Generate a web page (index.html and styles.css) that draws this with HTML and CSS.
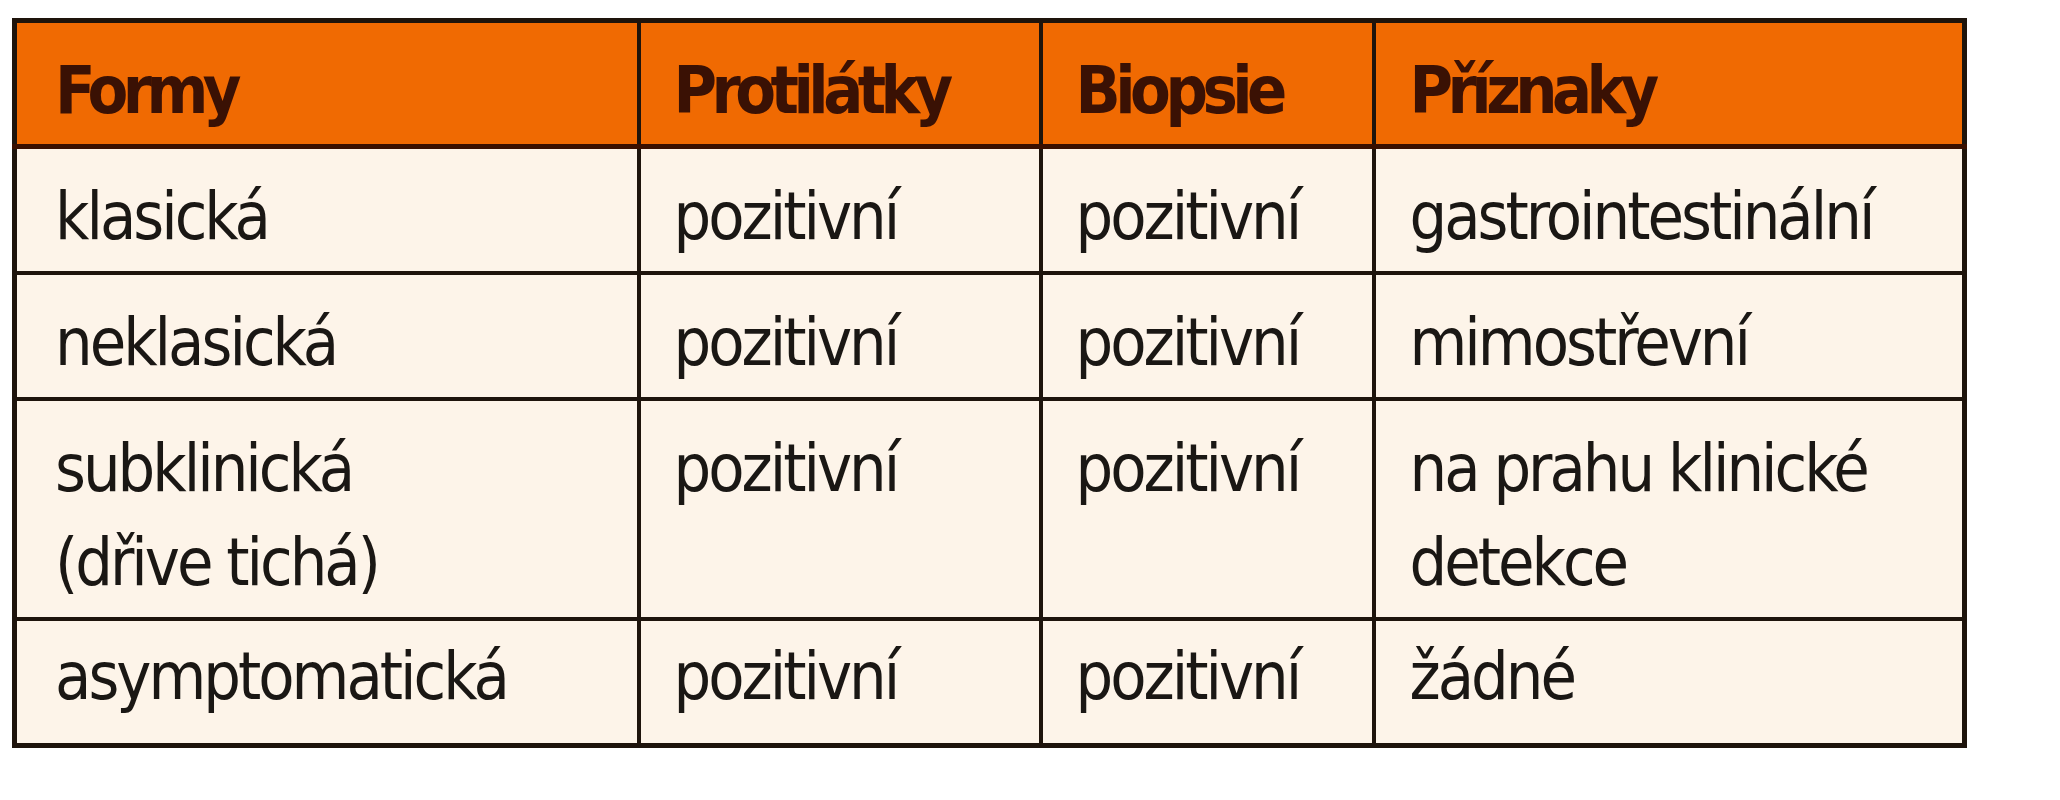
FILE: index.html
```html
<!DOCTYPE html>
<html lang="cs">
<head>
<meta charset="utf-8">
<title>Formy</title>
<link rel="stylesheet" href="styles.css">
</head>
<body>
<table class="forms">
  <colgroup>
    <col class="c1">
    <col class="c2">
    <col class="c3">
    <col class="c4">
  </colgroup>
  <thead>
    <tr class="head">
      <th>Formy</th>
      <th>Protilátky</th>
      <th>Biopsie</th>
      <th>Příznaky</th>
    </tr>
  </thead>
  <tbody>
    <tr>
      <td>klasická</td>
      <td>pozitivní</td>
      <td>pozitivní</td>
      <td>gastrointestinální</td>
    </tr>
    <tr>
      <td>neklasická</td>
      <td>pozitivní</td>
      <td>pozitivní</td>
      <td>mimostřevní</td>
    </tr>
    <tr>
      <td>subklinická<br>(dřive tichá)</td>
      <td>pozitivní</td>
      <td>pozitivní</td>
      <td>na prahu klinické<br>detekce</td>
    </tr>
    <tr class="last">
      <td>asymptomatická</td>
      <td>pozitivní</td>
      <td>pozitivní</td>
      <td>žádné</td>
    </tr>
  </tbody>
</table>
</body>
</html>
```

FILE: styles.css
```css
html, body {
  margin: 0;
  padding: 0;
  background: #ffffff;
}

body {
  padding: 18px 0 0 12px;
}

.forms {
  border-collapse: collapse;
  table-layout: fixed;
  width: 1950px;
  font-family: "DejaVu Sans Condensed", "Liberation Sans", sans-serif;
  font-size: 66px;
  line-height: 94px;
  letter-spacing: -3px;
  color: #1a1714;
  background: #fdf4e9;
  border: 5px solid #1e140c;
}

.c1 { width: 624px; }
.c2 { width: 402px; }
.c3 { width: 333px; }
.c4 { width: 591px; }

.forms th,
.forms td {
  border: 4px solid #1e140c;
  padding: 21px 10px 7px 33px;
  text-align: left;
  vertical-align: top;
  white-space: nowrap;
}

.forms th:first-child,
.forms td:first-child {
  padding-left: 38px;
}

.forms th:last-child,
.forms td:last-child {
  padding-left: 34px;
}

.forms th {
  background: #f06a02;
  color: #3a1104;
  font-weight: bold;
  letter-spacing: -5.5px;
  padding-top: 21px;
  padding-bottom: 6px;
}

.head th {
  border-bottom-color: #3a1000;
  border-bottom-width: 5px;
}

.last td {
  padding-top: 9px;
  padding-bottom: 19px;
}
```
